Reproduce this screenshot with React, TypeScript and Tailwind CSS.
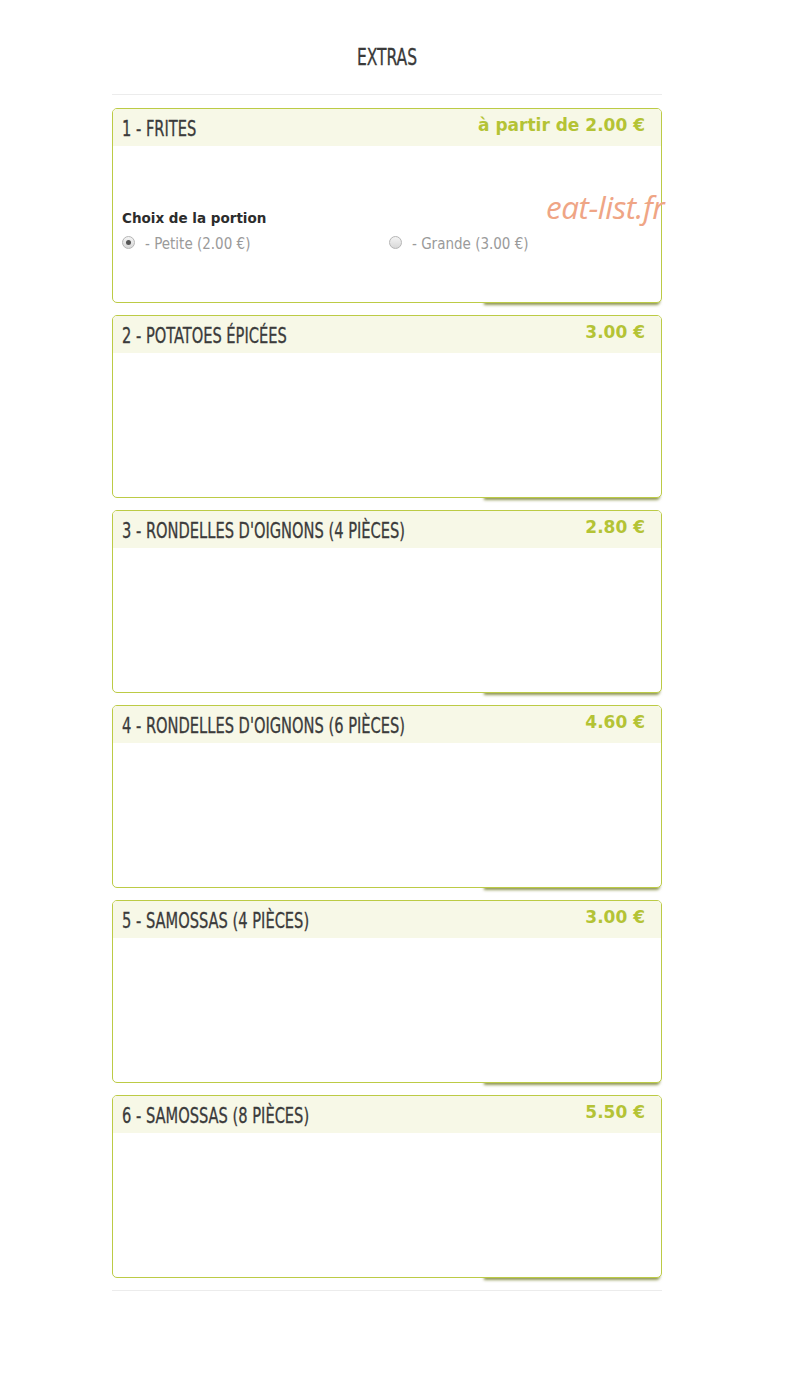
import React from "react";

const extras = [
  { id: 1, name: "1 - FRITES", price: "à partir de 2.00 €", portions: true, h: "h-[195px]" },
  { id: 2, name: "2 - POTATOES ÉPICÉES", price: "3.00 €", portions: false, h: "h-[183px]" },
  { id: 3, name: "3 - RONDELLES D'OIGNONS (4 PIÈCES)", price: "2.80 €", portions: false, h: "h-[183px]" },
  { id: 4, name: "4 - RONDELLES D'OIGNONS (6 PIÈCES)", price: "4.60 €", portions: false, h: "h-[183px]" },
  { id: 5, name: "5 - SAMOSSAS (4 PIÈCES)", price: "3.00 €", portions: false, h: "h-[183px]" },
  { id: 6, name: "6 - SAMOSSAS (8 PIÈCES)", price: "5.50 €", portions: false, h: "h-[183px]" },
];

const narrow = "font-['Liberation_Sans_Narrow','DejaVu_Sans_Condensed',sans-serif]";
const body = "font-['DejaVu_Sans','Open_Sans',sans-serif]";

function Radio({ checked }: { checked?: boolean }) {
  return (
    <span className="w-[13px] h-[13px] rounded-full border border-[#b5b5b5] bg-gradient-to-b from-[#f4f4f4] to-[#d8d8d8] flex items-center justify-center">
      {checked && <span className="w-[5px] h-[5px] rounded-full bg-[#555]" />}
    </span>
  );
}

export default function App() {
  return (
    <div className="bg-white min-h-[1380px] w-[799px]">
      <div className="w-[550px] ml-[112px] pt-[42px]">
        <h2 className={`${narrow} text-center text-[23px] text-[#3a3a3a] leading-[30px] scale-x-[0.75] [-webkit-text-stroke:0.3px_#3a3a3a]`}>EXTRAS</h2>
        <div className="h-px bg-[#ececec] mt-[22px] mb-[13px]" />
        <div className="flex flex-col gap-[12px]">
          {extras.map(e => (
            <div key={e.id} className={`relative ${e.h}`}>
              {/* olive shadow under the lower right edge */}
              <div className="absolute right-[1px] bottom-0 w-[178px] h-[8px] rounded-br-[5px] shadow-[0_3px_3px_-1px_rgba(95,105,10,0.7)]" />
              <div className="relative h-full rounded-[5px] border border-[#bccb45] bg-white overflow-hidden">
                <div className="h-[37px] bg-[#f7f8e7] flex items-center justify-between pl-[9px] pr-[16px]">
                  <span className={`${narrow} text-[22px] text-[#3b3b3b] origin-left scale-x-[0.74] whitespace-nowrap pt-[1px] [-webkit-text-stroke:0.3px_#3b3b3b]`}>{e.name}</span>
                  <span className={`${body} text-[17px] font-bold text-[#b4c335] pb-[3px]`}>{e.price}</span>
                </div>
                {e.portions && (
                  <div className="pl-[9px] pt-[63px]">
                    <p className={`${body} text-[13.5px] font-bold text-[#2c2c2c] leading-[18px]`}>Choix de la portion</p>
                    <div className="flex mt-[3px]">
                      <label className="w-[267px] flex items-center gap-[10px]">
                        <Radio checked />
                        <span className={`${narrow} text-[15px] text-[#9a9a9a] pt-[3px]`}>- Petite (2.00 €)</span>
                      </label>
                      <label className="flex items-center gap-[10px]">
                        <Radio />
                        <span className={`${narrow} text-[15px] text-[#9a9a9a] pt-[3px]`}>- Grande (3.00 €)</span>
                      </label>
                    </div>
                  </div>
                )}
              </div>
              {e.portions && (
                <span className="absolute left-[434px] top-[83px] whitespace-nowrap font-['Open_Sans',sans-serif] italic text-[31.5px] text-[#efa585] tracking-[-0.5px] leading-none">eat-list.fr</span>
              )}
            </div>
          ))}
        </div>
        <div className="h-px bg-[#ececec] mt-[12px]" />
      </div>
    </div>
  );
}
